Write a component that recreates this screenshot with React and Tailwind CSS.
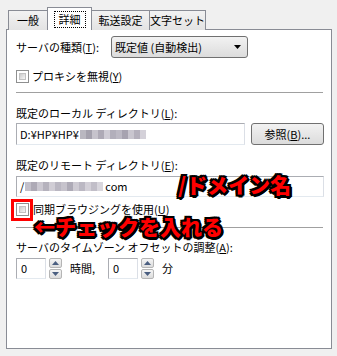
import React from "react";

const jp = "font-['Meiryo_UI','Noto_Sans_CJK_JP',sans-serif]";

function Mn({ k }) {
  // mnemonic letter like (T)
  return (
    <span>
      (<span className="underline underline-offset-1">{k}</span>)
    </span>
  );
}

function Checkbox() {
  return (
    <div className="w-[13px] h-[13px] border border-[#8e8f8f] bg-white p-[2px] shrink-0">
      <div className="w-full h-full border border-[#c2c2c2] bg-gradient-to-br from-[#cbcbcb] to-[#f6f6f6]" />
    </div>
  );
}

function Mosaic({ cells }) {
  return (
    <div className="flex h-[9px]">
      {cells.map((c, i) => (
        <div key={i} className="w-[6px] h-full" style={{ background: c }} />
      ))}
    </div>
  );
}

function Spin() {
  return (
    <div className="flex flex-col w-[13px] h-[21px] gap-[1px] ml-[3px]">
      {["up", "down"].map((d) => (
        <div
          key={d}
          className="flex-1 border border-[#b5b5b5] rounded-[2px] bg-gradient-to-b from-[#f5f5f5] to-[#dcdcdc] flex items-center justify-center"
        >
          <svg width="7" height="4" viewBox="0 0 7 4">
            {d === "up" ? (
              <path d="M0 4 L3.5 0 L7 4 Z" fill="#4a5e80" />
            ) : (
              <path d="M0 0 L3.5 4 L7 0 Z" fill="#4a5e80" />
            )}
          </svg>
        </div>
      ))}
    </div>
  );
}

export default function App() {
  const tabs = [
    { label: "一般", w: "w-[40px]" },
    { label: "詳細", w: "w-[45px]", active: true },
    { label: "転送設定", w: "w-[59px]" },
    { label: "文字セット", w: "w-[57px]" },
  ];

  const stroke =
    "[text-shadow:2px_0_0_#000,-2px_0_0_#000,0_2px_0_#000,0_-2px_0_#000,2px_2px_0_#000,-2px_-2px_0_#000,2px_-2px_0_#000,-2px_2px_0_#000,3px_1px_0_#000,1px_3px_0_#000]";

  return (
    <div className={`relative w-[337px] h-[356px] bg-[#f0f0f0] pt-[7px] pl-[6px] text-[11px] text-black ${jp}`}>
      {/* Tabs */}
      <div className="flex items-end h-[23px] pl-[2px] whitespace-nowrap">
        {tabs.map((t) =>
          t.active ? (
            <div
              key={t.label}
              className={`${t.w} h-[23px] relative z-10 bg-white border border-b-0 border-[#898c95] flex items-start justify-center pt-[3px] -ml-[1px]`}
            >
              <span className="border border-dotted border-black px-[4px] leading-[15px]">{t.label}</span>
            </div>
          ) : (
            <div
              key={t.label}
              className={`${t.w} h-[20px] border border-b-0 border-[#898c95] bg-gradient-to-b from-[#f2f2f2] to-[#e3e3e3] flex items-center justify-center -ml-[1px] first:ml-0`}
            >
              {t.label}
            </div>
          )
        )}
      </div>

      {/* Panel */}
      <div className="-mt-[1px] w-[326px] h-[320px] border border-[#898c95] bg-white pl-[9px] pr-[7px]">
        <div className="flex items-center h-[22px] mt-[6px]">
          <span className="w-[95px]">
            サーバの種類<Mn k="T" />:
          </span>
          <div className="w-[137px] h-[22px] border border-[#707070] rounded-[3px] bg-gradient-to-b from-[#f2f2f2] to-[#dcdcdc] flex items-center pl-[3px] pr-[6px]">
            <span className="flex-1">既定値 (自動検出)</span>
            <svg width="7" height="4" viewBox="0 0 7 4">
              <path d="M0 0 L7 0 L3.5 4 Z" fill="#000" />
            </svg>
          </div>
        </div>

        <div className="flex items-center h-[13px] mt-[12px] gap-[3px]">
          <Checkbox />
          <span>
            プロキシを無視<Mn k="Y" />
          </span>
        </div>

        <div className="h-[1px] bg-[#a0a0a0] mt-[9px] mr-[1px]" />

        <div className="mt-[12px] leading-[16px]">
          既定のローカル ディレクトリ<Mn k="L" />:
        </div>
        <div className="flex mt-[2px] gap-[6px]">
          <div className="w-[229px] h-[22px] border border-[#abadb3] border-b-[#e3e9ef] border-r-[#dbdfe6] flex items-center pl-[3px] gap-[1px]">
            <span>D:¥HP¥HP¥</span>
            <Mosaic
              cells={["#b9b7c0", "#a4a1ad", "#c6c3cc", "#aeaab6", "#cfccd5", "#b2afbb", "#bcb9c4", "#a7a3b0", "#c9c6cf", "#b4b0bc", "#d4d1d9"]}
            />
          </div>
          <div className="w-[73px] h-[22px] border border-[#707070] rounded-[3px] bg-gradient-to-b from-[#f2f2f2] to-[#dcdcdc] flex items-center justify-center">
            参照<Mn k="B" />...
          </div>
        </div>

        <div className="mt-[12px] leading-[16px]">
          既定のリモート ディレクトリ<Mn k="E" />:
        </div>
        <div className="mt-[3px] w-[308px] h-[21px] border border-[#abadb3] border-b-[#e3e9ef] border-r-[#dbdfe6] flex items-center pl-[3px] gap-[1px]">
          <span>/</span>
          <Mosaic
            cells={["#c3c0ca", "#aeaab6", "#cbc8d1", "#b5b2bd", "#d0cdd5", "#bab7c2", "#c6c3cc", "#adaab6", "#cecbd3", "#bbb8c3", "#d3d0d8", "#c1bec8", "#d8d6dd"]}
          />
          <span className="ml-[1px]">com</span>
        </div>

        <div className="flex items-center h-[13px] mt-[6px] gap-[4px]">
          <Checkbox />
          <span>
            同期ブラウジングを使用<Mn k="U" />
          </span>
        </div>

        <div className="h-[1px] bg-[#a0a0a0] mt-[11px] mr-[1px]" />

        <div className="mt-[11px] leading-[16px]">
          サーバのタイムゾーン オフセットの調整<Mn k="A" />:
        </div>
        <div className="flex items-center mt-[3px]">
          <div className="w-[30px] h-[21px] border border-[#abadb3] border-b-[#e3e9ef] border-r-[#dbdfe6] flex items-center pl-[4px]">
            0
          </div>
          <Spin />
          <span className="ml-[8px] w-[38px]">時間,</span>
          <div className="w-[30px] h-[21px] border border-[#abadb3] border-b-[#e3e9ef] border-r-[#dbdfe6] flex items-center pl-[4px]">
            0
          </div>
          <Spin />
          <span className="ml-[8px]">分</span>
        </div>
      </div>

      {/* annotations over the dialog */}
      <div className="absolute left-[11px] top-[199px] w-[22px] h-[22px] border-[3px] border-[#ff0000]" />
      <div
        className={`absolute left-[178px] top-[171px] text-[21px] font-black text-[#ff0000] leading-[26px] whitespace-nowrap font-['Noto_Sans_CJK_JP',sans-serif] ${stroke}`}
      >
        /ドメイン名
      </div>
      <div
        className={`absolute left-[34px] top-[213px] text-[21px] font-black text-[#ff0000] leading-[26px] whitespace-nowrap font-['Noto_Sans_CJK_JP',sans-serif] ${stroke}`}
      >
        ←チェックを入れる
      </div>
    </div>
  );
}
